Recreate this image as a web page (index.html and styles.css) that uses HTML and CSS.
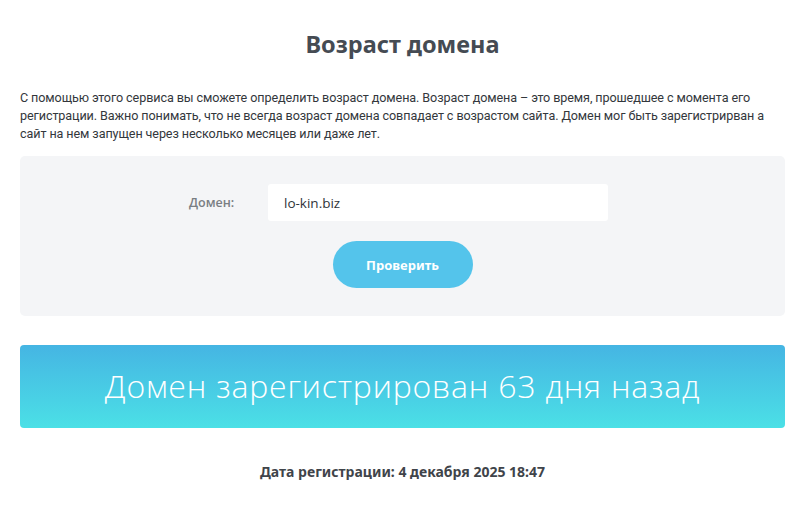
FILE: index.html
```html
<!DOCTYPE html>
<html lang="ru">
<head>
<meta charset="utf-8">
<link rel="stylesheet" href="styles.css">
</head>
<body>
<div class="page">
  <h1 class="title">Возраст домена</h1>
  <p class="intro">С помощью этого сервиса вы сможете определить возраст домена. Возраст домена – это время, прошедшее с момента его регистрации. Важно понимать, что не всегда возраст домена совпадает с возрастом сайта. Домен мог быть зарегистрирван а сайт на нем запущен через несколько месяцев или даже лет.</p>
  <form class="panel">
    <div class="row">
      <label class="label">Домен:</label>
      <div class="input">lo-kin.biz</div>
    </div>
    <button class="btn" type="button">Проверить</button>
  </form>
  <div class="result">Домен зарегистрирован 63 дня назад</div>
  <div class="date">Дата регистрации: 4 декабря 2025 18:47</div>
</div>
</body>
</html>
```
FILE: styles.css
```css
* { box-sizing: border-box; }
html, body { margin: 0; padding: 0; background: #fff; }
body { font-family: "Open Sans", "Noto Sans", sans-serif; color: #3f444a; }
.page { margin: 0 15px 0 20px; padding-top: 27px; }
.title {
  margin: 0;
  text-align: center;
  font-family: "Noto Sans", "Open Sans", sans-serif;
  font-weight: 700;
  font-size: 23.5px;
  line-height: 34px;
  color: #454b53;
}
.intro {
  margin: 28px 0 0;
  font-family: "Roboto", sans-serif;
  font-size: 12.6px;
  line-height: 18px;
  color: #33373c;
  letter-spacing: -0.1px;
}
.panel {
  margin-top: 13px;
  background: #f4f5f7;
  border-radius: 5px;
  height: 160px;
  padding-top: 28px;
  display: flex;
  flex-direction: column;
  align-items: center;
}
.row { display: flex; align-items: center; margin-right: 8px; }
.label {
  width: 79px;
  font-size: 12.5px;
  font-weight: 600;
  color: #7a7e83;
}
.input {
  width: 340px;
  height: 37px;
  background: #fff;
  border-radius: 3px;
  padding-left: 16px;
  display: flex;
  align-items: center;
  font-size: 13.5px;
  color: #2f3338;
}
.btn {
  margin-top: 20px;
  width: 140px;
  height: 47px;
  border: 0;
  border-radius: 24px;
  background: #54c4eb;
  color: #fff;
  font-family: "Noto Sans", sans-serif;
  font-weight: 700;
  font-size: 13px;
}
.result {
  margin-top: 29px;
  height: 83px;
  border-radius: 4px;
  background: linear-gradient(180deg, #45b5e3 0%, #4be0e6 100%);
  color: #fff;
  display: flex;
  align-items: center;
  justify-content: center;
  font-family: "Open Sans", sans-serif;
  font-weight: 300;
  font-size: 32px;
  letter-spacing: 0.8px;
  padding-bottom: 2px;
}
.date {
  margin-top: 34px;
  text-align: center;
  font-family: "Noto Sans", sans-serif;
  font-weight: 700;
  font-size: 14px;
  color: #3f444a;
}
```
